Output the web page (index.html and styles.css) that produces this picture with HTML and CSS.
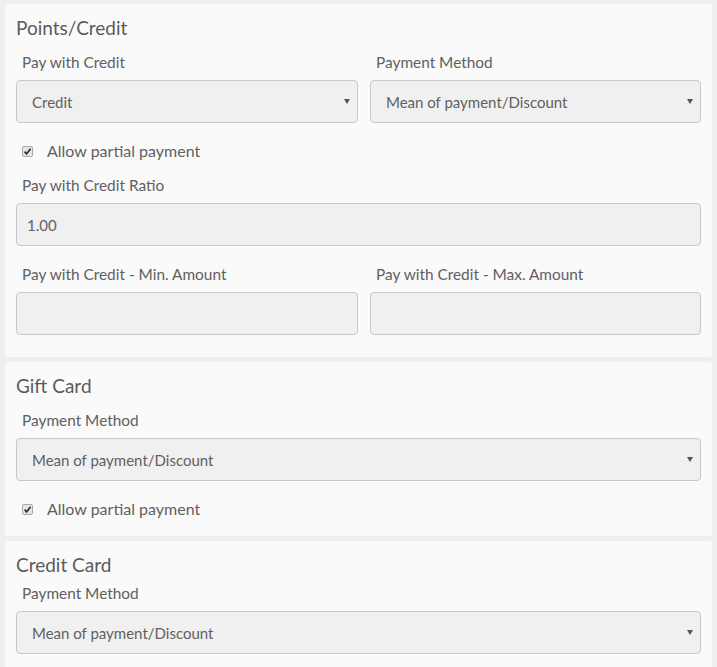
FILE: index.html
```html
<!DOCTYPE html>
<html>
<head>
<meta charset="utf-8">
<link rel="stylesheet" href="styles.css">
</head>
<body>
<section class="card">
  <h2 class="card-title">Points/Credit</h2>
  <div class="row two">
    <div class="field">
      <label class="label">Pay with Credit</label>
      <div class="select-wrap"><select class="select"><option>Credit</option></select></div>
    </div>
    <div class="field">
      <label class="label">Payment Method</label>
      <div class="select-wrap"><select class="select"><option>Mean of payment/Discount</option></select></div>
    </div>
  </div>
  <div class="check-row">
    <span class="check"><svg viewBox="0 0 11 11" width="11" height="11"><path d="M2.6 5.6 L4.6 7.8 L8.6 2.8" fill="none" stroke="#333" stroke-width="1.8"/></svg></span>
    <span class="check-label">Allow partial payment</span>
  </div>
  <div class="field">
    <label class="label">Pay with Credit Ratio</label>
    <input class="input" type="text" value="1.00">
  </div>
  <div class="row two spaced">
    <div class="field">
      <label class="label">Pay with Credit - Min. Amount</label>
      <input class="input" type="text">
    </div>
    <div class="field">
      <label class="label">Pay with Credit - Max. Amount</label>
      <input class="input" type="text">
    </div>
  </div>
</section>

<section class="card">
  <h2 class="card-title">Gift Card</h2>
  <div class="field">
    <label class="label">Payment Method</label>
    <div class="select-wrap"><select class="select"><option>Mean of payment/Discount</option></select></div>
  </div>
  <div class="check-row last">
    <span class="check"><svg viewBox="0 0 11 11" width="11" height="11"><path d="M2.6 5.6 L4.6 7.8 L8.6 2.8" fill="none" stroke="#333" stroke-width="1.8"/></svg></span>
    <span class="check-label">Allow partial payment</span>
  </div>
</section>

<section class="card compact">
  <h2 class="card-title">Credit Card</h2>
  <div class="field">
    <label class="label">Payment Method</label>
    <div class="select-wrap"><select class="select"><option>Mean of payment/Discount</option></select></div>
  </div>
</section>
</body>
</html>
```

FILE: styles.css
```css
html, body {
  margin: 0;
  padding: 0;
  background: #efefef;
  height: 667px;
  overflow: hidden;
}
body {
  padding: 4px 5px 0 5px;
  font-family: Lato, "Open Sans", sans-serif;
  color: #606060;
  display: flex;
  flex-direction: column;
  gap: 5px;
  box-sizing: border-box;
}
.card {
  background: #fafafa;
  border-radius: 4px;
  padding: 12px 11px 22px 11px;
  flex-shrink: 0;
}
.card-title {
  margin: 0 0 12px 0;
  font-size: 19px;
  line-height: 24px;
  font-weight: normal;
  color: #5a5a5a;
}
.compact .card-title { margin-bottom: 6px; }
.field {
  display: flex;
  flex-direction: column;
}
.label {
  font-size: 15.4px;
  line-height: 20px;
  padding-left: 6px;
  margin-bottom: 8px;
}
.row.two {
  display: grid;
  grid-template-columns: 342px 1fr;
  column-gap: 12px;
}
.row.spaced { margin-top: 18px; }
.select-wrap {
  position: relative;
}
.select-wrap::after {
  content: "";
  position: absolute;
  right: 8px;
  top: 19px;
  border-left: 3px solid transparent;
  border-right: 3px solid transparent;
  border-top: 5px solid #555;
}
.select, .input {
  display: block;
  width: 100%;
  box-sizing: border-box;
  height: 43px;
  border: 1px solid #c8c8c8;
  border-radius: 4px;
  background: #f0f0f0;
  font-family: inherit;
  font-size: 15px;
  color: #606060;
  margin: 0;
  outline: none;
}
.select {
  appearance: none;
  -webkit-appearance: none;
  padding: 0 20px 0 15px;
}
.input { padding: 0 10px; }
.check-row {
  display: flex;
  align-items: center;
  height: 20px;
  margin: 18px 0 14px 6px;
  font-size: 16px;
}
.check-row.last { margin-bottom: -5px; }
.check {
  width: 11px;
  height: 11px;
  box-sizing: border-box;
  border: 1px solid #a8a8a8;
  border-radius: 2px;
  background: #e6e6e6;
  display: flex;
  align-items: center;
  justify-content: center;
  margin-right: 14px;
  overflow: hidden;
}
.check svg { display: block; flex-shrink: 0; }
.check-label { line-height: 20px; }
```
